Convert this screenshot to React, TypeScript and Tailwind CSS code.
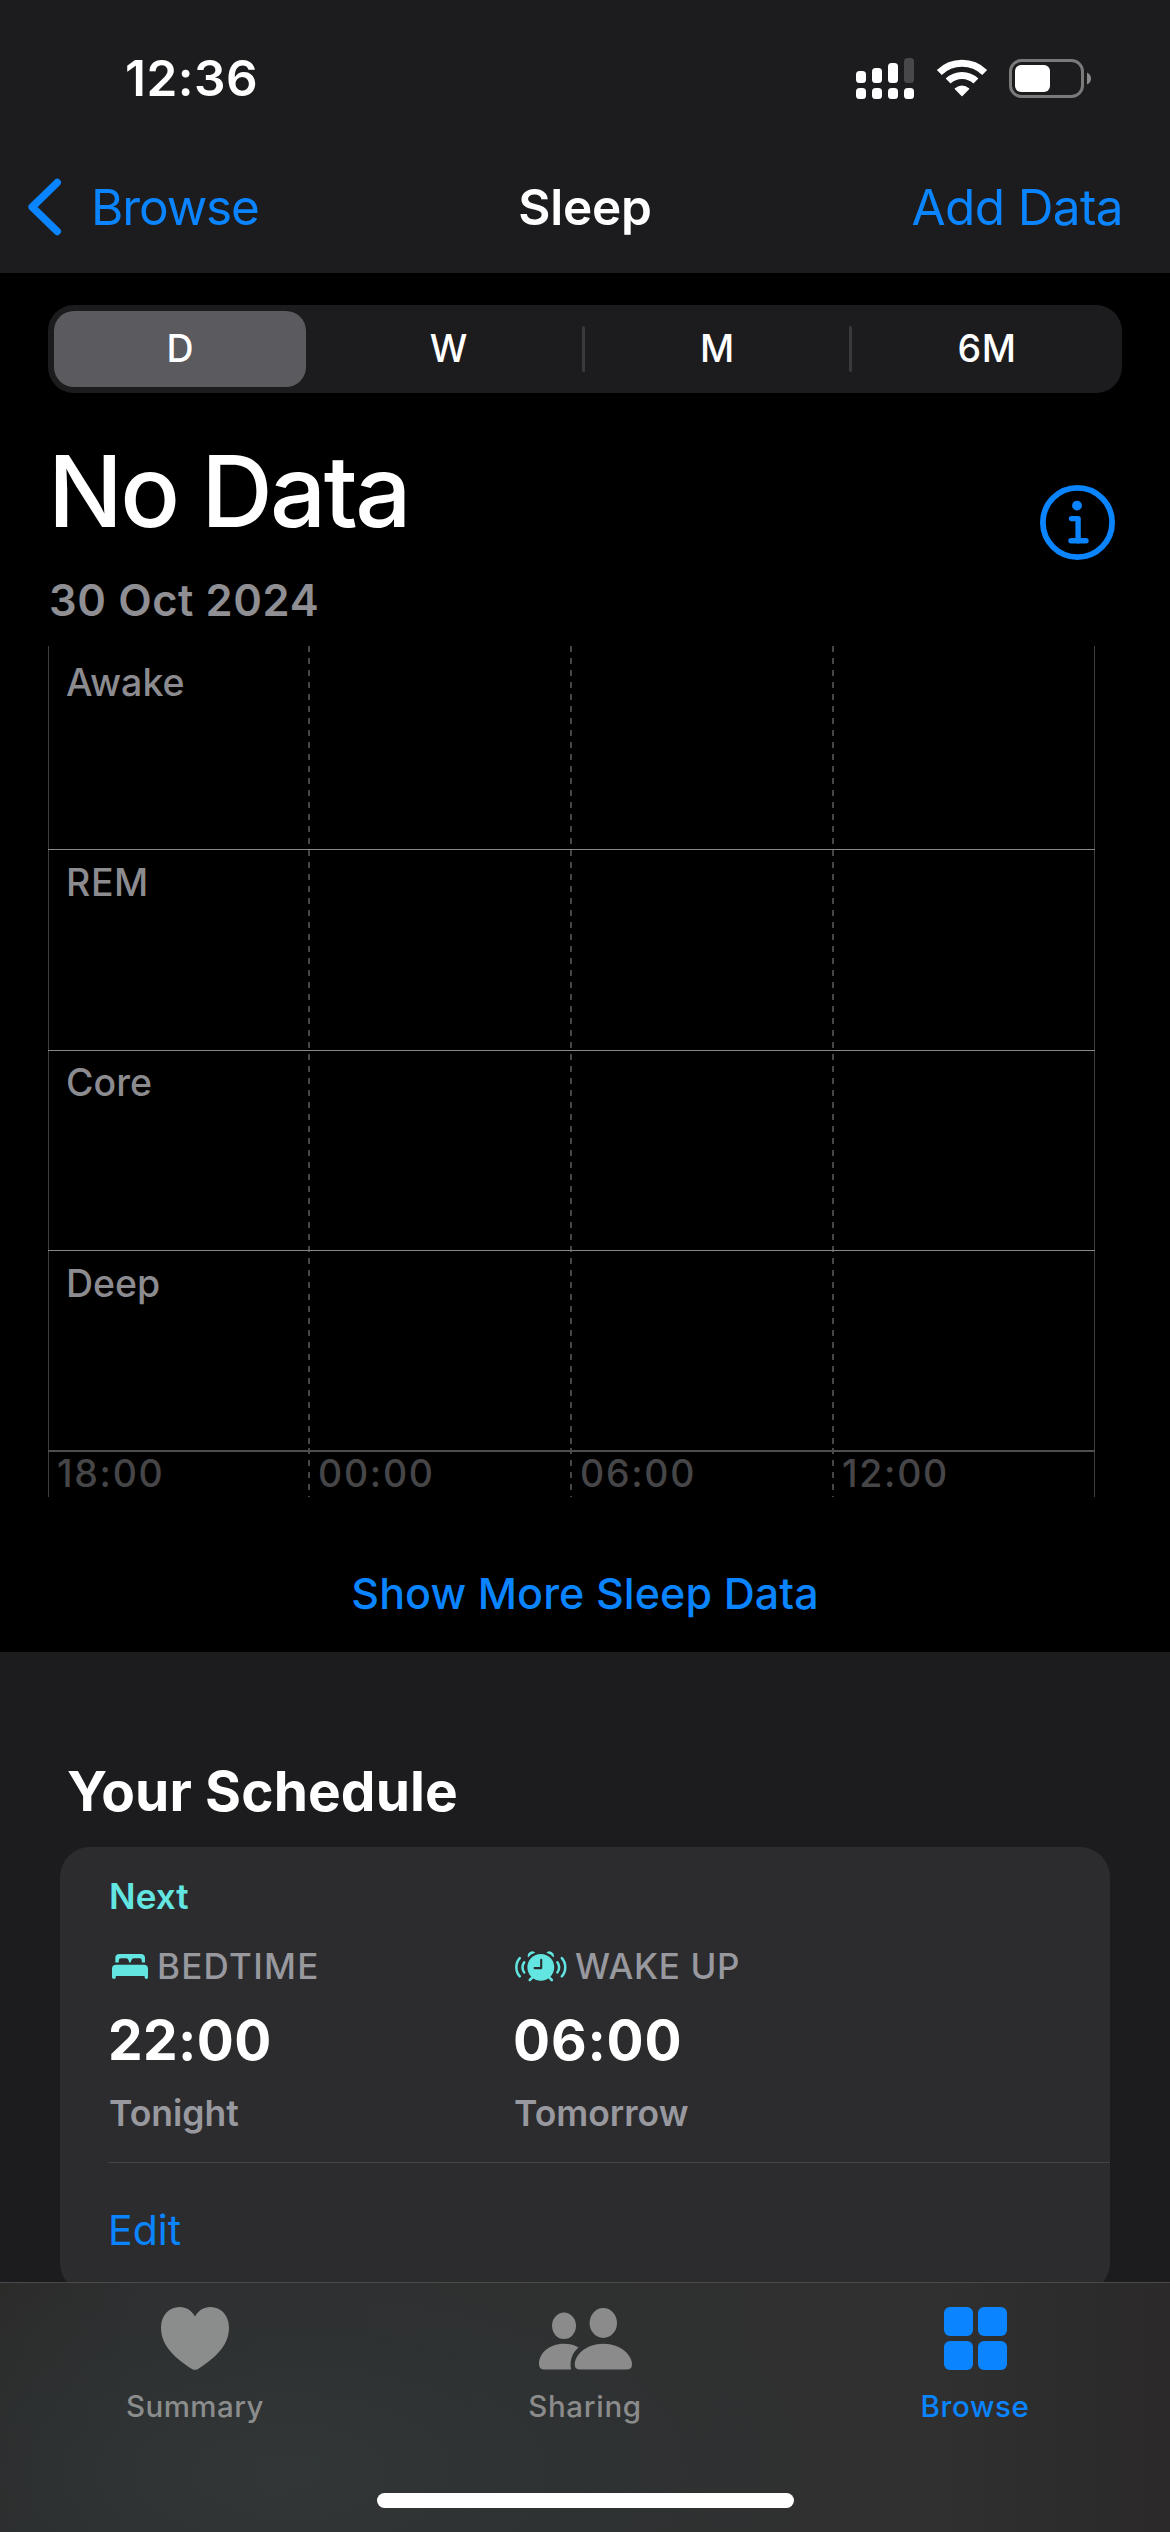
import React from "react";

const SEGMENT_LINE = "h-[46px] w-[3px] rounded-full bg-[#3a3a3d]";

function CellularIcon() {
  return (
    <svg width="58" height="41" viewBox="0 0 58 41" fill="#fff">
      <rect x="0" y="13" width="10" height="12" rx="3.5" />
      <rect x="16" y="10" width="10" height="15" rx="3.5" />
      <rect x="32" y="5" width="10" height="20" rx="3.5" />
      <rect x="48" y="0" width="10" height="25" rx="3.5" fill="#48484a" />
      {[0, 16, 32, 48].map((x) => (
        <rect key={x} x={x} y="30" width="10" height="11" rx="3.5" />
      ))}
    </svg>
  );
}

function WifiIcon() {
  return (
    <svg width="52" height="38" viewBox="0 0 52 38" fill="none" stroke="#fff" strokeWidth="7">
      <path d="M3.3 13.5A32.7 32.7 0 0 1 48.7 13.5" />
      <path d="M12.1 22.1A20 20 0 0 1 39.9 22.1" />
      <path
        d="M26 36.5L19.4 29.8Q26 24.4 32.6 29.8Z"
        fill="#fff"
        strokeWidth="1.4"
        strokeLinejoin="round"
      />
    </svg>
  );
}

function BatteryIcon() {
  return (
    <svg width="82" height="39" viewBox="0 0 82 39">
      <rect x="1.5" y="1.5" width="72" height="36" rx="11" fill="none" stroke="#7a7a7b" strokeWidth="3" />
      <rect x="6" y="6" width="35" height="27" rx="6" fill="#fff" />
      <path d="M78 13.5Q82 15.5 82 19.5T78 25.5Z" fill="#8a8a8b" />
    </svg>
  );
}

function InfoIcon() {
  return (
    <svg width="75" height="75" viewBox="0 0 75 75" fill="none" stroke="#0a84ff">
      <circle cx="37.5" cy="37.5" r="34.6" strokeWidth="5.8" />
      <circle cx="37" cy="20.6" r="4.9" fill="#0a84ff" stroke="none" />
      <path d="M31.5 33.6H38.1V55.7" strokeWidth="5.4" strokeLinecap="round" strokeLinejoin="round" />
      <path d="M31 55.8H46" strokeWidth="5.4" strokeLinecap="round" />
    </svg>
  );
}

function BedIcon() {
  return (
    <svg width="36" height="25" viewBox="0 0 36 25" fill="#63e6e2">
      <path d="M3.3 8.6V4.2Q3.3 0 7.5 0H28.8Q33 0 33 4.2V8.6H29.8V6.4Q29.8 4.2 27.6 4.2H22Q19.8 4.2 19.4 6.2L18.6 8.6H17.2L16.6 6.2Q16.2 4.2 14 4.2H9Q6.8 4.2 6.8 6.4V8.6Z" />
      <path d="M0 15Q0 10.8 4.2 10.8H31.8Q36 10.8 36 15V23.6Q36 25 34.4 25T32.6 23.6V22H3.8V23.6Q3.8 25 2 25T0 23.6Z" />
    </svg>
  );
}

function AlarmIcon() {
  return (
    <svg width="52" height="31" viewBox="0 0 52 31" fill="none" stroke="#63e6e2" strokeLinecap="round">
      <circle cx="25.8" cy="16.3" r="13.4" fill="#63e6e2" stroke="none" />
      <path d="M13 6.4Q11.8 2.6 15 0.9Q18.6 -0.7 20.2 1.8Q15.6 3.2 13 6.4Z" fill="#63e6e2" stroke="none" />
      <path d="M38.6 6.4Q39.8 2.6 36.6 0.9Q33 -0.7 31.4 1.8Q36 3.2 38.6 6.4Z" fill="#63e6e2" stroke="none" />
      <path d="M17.4 26.4L14.8 29M34.2 26.4L36.8 29" strokeWidth="2.6" />
      <path d="M26.2 8.8V17.1H19.6" stroke="#2c2c2e" strokeWidth="2.1" strokeLinejoin="round" />
      <path d="M4.8 7.2C0.2 12 0.2 20.6 4.8 25.4M46.8 7.2C51.4 12 51.4 20.6 46.8 25.4" strokeWidth="2.5" />
      <path d="M9.2 11.2Q5.6 16.3 9.2 21.4M42.4 11.2Q46 16.3 42.4 21.4" strokeWidth="2.5" />
    </svg>
  );
}

function HeartIcon() {
  return (
    <svg width="68" height="63" viewBox="0 0 68 63" fill="#8b8c8c">
      <path d="M34 9.6C37 3.8 42.6 0 49.4 0C60 0 68 8.6 68 20.4C68 37 56.6 49.4 37 61.9Q34 63.7 31 61.9C11.4 49.4 0 37 0 20.4C0 8.6 8 0 18.6 0C25.4 0 31 3.8 34 9.6Z" />
    </svg>
  );
}

function PeopleIcon() {
  return (
    <svg width="93" height="63" viewBox="0 0 93 63" fill="#8b8b8b">
      <ellipse cx="25" cy="18.8" rx="12" ry="13.2" />
      <ellipse cx="64.3" cy="16" rx="13.7" ry="15" />
      <path d="M39.5 40.6C35 37.6 30.4 36.7 25 36.7C9.6 36.7 0 46.8 0 56.8Q0 62.5 4.6 62.5H32C30.6 53.4 33 46.4 39.5 40.6Z" />
      <path d="M64.3 36.7C46.4 36.7 35.7 48.6 35.7 57.4Q35.7 62.5 41 62.5H87.7Q93 62.5 93 57.4C93 48.6 82.2 36.7 64.3 36.7Z" />
    </svg>
  );
}

function GridIcon() {
  return (
    <span className="grid grid-cols-[29px_29px] grid-rows-[29px_29px] gap-[5px]">
      {[0, 1, 2, 3].map((i) => (
        <span key={i} className="rounded-[6px] bg-[#0a84ff]" />
      ))}
    </span>
  );
}

function Header() {
  return (
    <header className="h-[273px] shrink-0 bg-[#1c1c1e]">
      <div className="flex h-[156px] items-center pl-[125px]">
        <span className="w-[731px] text-[49.5px] leading-[60px] font-semibold tracking-[0.49px]">12:36</span>
        <CellularIcon />
        <span className="ml-[22px]">
          <WifiIcon />
        </span>
        <span className="ml-[21px]">
          <BatteryIcon />
        </span>
      </div>
      <nav className="grid h-[102px] grid-cols-[1fr_auto_1fr] items-center text-[49.5px] leading-[60px]">
        <button className="flex items-center pl-[28px] text-[#0a84ff]">
          <svg width="34" height="58" viewBox="0 0 34 58" fill="none" stroke="#0a84ff" strokeWidth="7.6" strokeLinecap="round" strokeLinejoin="round">
            <path d="M29.2 4.6L4.2 29L29.2 53.4" />
          </svg>
          <span className="ml-[29px] tracking-[-1.12px]">Browse</span>
        </button>
        <h1 className="font-semibold tracking-[-0.22px]">Sleep</h1>
        <button className="justify-self-end pr-[47px] tracking-[-0.62px] text-[#0a84ff]">Add Data</button>
      </nav>
    </header>
  );
}

function RangePicker() {
  return (
    <div className="mx-12 flex h-[88px] items-center rounded-[26px] bg-[#1c1c1e] text-center text-[37.5px] font-medium">
      <span className="ml-[6px] flex h-[76px] w-[252px] items-center justify-center rounded-[20px] bg-[#5b5a5f]">D</span>
      <span className="ml-[9px] w-[267px]">W</span>
      <span className={SEGMENT_LINE} />
      <span className="w-[264px]">M</span>
      <span className={SEGMENT_LINE} />
      <span className="flex-1 tracking-[0.48px]">6M</span>
    </div>
  );
}

const DIVIDERS = [261, 523, 785];

function SleepChart() {
  return (
    <div className="relative mt-[21px] ml-12 h-[851px] w-[1047px] text-[37.5px] leading-[44px] font-medium">
      <svg className="absolute inset-0" width="1047" height="851" viewBox="0 0 1047 851" fill="none">
        <rect x="0" y="0" width="1" height="851" fill="#3f3f41" />
        <rect x="1046" y="0" width="1" height="851" fill="#3f3f41" />
        {DIVIDERS.map((x) => (
          <g key={x} stroke="#464648" strokeWidth="2" strokeDasharray="6 6">
            <path d={`M${x} 0V802`} />
            <path d={`M${x} 802V851`} />
          </g>
        ))}
        <rect y="203" width="1047" height="1" fill="#87878a" />
        <rect y="404" width="1047" height="1" fill="#87878a" />
        <rect y="604" width="1047" height="1" fill="#87878a" />
        <rect y="804" width="1047" height="2" fill="#4e4e50" />
      </svg>
      <div className="relative grid h-[806px] grid-rows-[204px_200px_200px_202px] pl-[18px] text-[#8b8b90]">
        <span className="pt-[15px]">Awake</span>
        <span className="pt-[11px] tracking-[0.6px]">REM</span>
        <span className="pt-[11px]">Core</span>
        <span className="pt-[12px]">Deep</span>
      </div>
      <div className="relative grid grid-cols-[261px_262px_262px_262px] pl-[9px] tracking-[1.7px] text-[#464648]">
        <span>18:00</span>
        <span>00:00</span>
        <span>06:00</span>
        <span>12:00</span>
      </div>
    </div>
  );
}

function Summary() {
  return (
    <section className="h-[1379px] shrink-0 bg-black pt-8">
      <RangePicker />
      <div className="mt-[38px] flex h-[194px] justify-between pr-[55px] pl-[48px]">
        <div>
          <h2 className="text-[99px] leading-[120px] font-medium tracking-[-2.6px]">No Data</h2>
          <p className="mt-[24px] pl-[1px] text-[43.5px] leading-[50px] font-semibold tracking-[0.6px] text-[#8e8e93]">
            30 Oct 2024
          </p>
        </div>
        <button className="h-[75px] pt-[54px]">
          <InfoIcon />
        </button>
      </div>
      <SleepChart />
      <button className="mt-[68px] block w-full text-center text-[43px] leading-[56px] font-medium tracking-[0.09px] text-[#0a84ff]">
        Show More Sleep Data
      </button>
    </section>
  );
}

type SlotProps = { icon: React.ReactNode; label: string; labelClass: string; time: string; timeClass: string; day: string };

function Slot({ icon, label, labelClass, time, timeClass, day }: SlotProps) {
  return (
    <div>
      <div className={"flex h-12 items-center text-[35px] font-medium text-[#98989f] " + labelClass}>
        {icon}
        {label}
      </div>
      <div className={"mt-[20px] text-[55px] leading-[60px] font-bold " + timeClass}>{time}</div>
      <div className="mt-[20px] pl-px text-[35.5px] leading-[48px] font-semibold text-[#98989f]">{day}</div>
    </div>
  );
}

function Schedule() {
  return (
    <section className="min-h-0 flex-1 overflow-hidden bg-[#1c1c1e] pt-[104px]">
      <h2 className="pl-[67px] text-[55px] leading-[70px] font-bold tracking-[0.1px]">Your Schedule</h2>
      <div className="mx-[60px] mt-[21px] h-[446px] rounded-[30px] bg-[#2c2c2e] pt-[25px] pl-12">
        <div className="pl-px text-[35px] leading-[48px] font-semibold tracking-[0.1px] text-[#63e6e2]">Next</div>
        <div className="mt-[22px] grid grid-cols-[405px_auto]">
          <Slot
            icon={<BedIcon />}
            label="BEDTIME"
            labelClass="gap-[9px] pl-1 tracking-[1.26px]"
            time="22:00"
            timeClass="tracking-[0.4px]"
            day="Tonight"
          />
          <Slot
            icon={<AlarmIcon />}
            label="WAKE UP"
            labelClass="gap-[8px] pl-[2px] tracking-[0.64px]"
            time="06:00"
            timeClass="tracking-[0.8px]"
            day="Tomorrow"
          />
        </div>
        <div className="mt-6 flex h-[132px] items-center border-t border-[#434346] pt-[5px] text-[41px] text-[#0a84ff]">
          Edit
        </div>
      </div>
    </section>
  );
}

type TabProps = { icon: React.ReactNode; label: string; className: string };

function Tab({ icon, label, className }: TabProps) {
  return (
    <button className={"flex flex-col items-center text-[29.5px] leading-[36px] font-medium " + className}>
      <span className="flex h-[64px] items-center">{icon}</span>
      <span className="mt-[18px]">{label}</span>
    </button>
  );
}

function TabBar() {
  return (
    <footer className="h-[250px] shrink-0 border-t border-[#4a4a4b] bg-[radial-gradient(ellipse_540px_250px_at_280px_190px,rgba(50,56,57,0.8),rgba(46,52,53,0.5)_55%,transparent),linear-gradient(to_right,#2b2a29,#2e2e2f_12%,#2f3030_50%,#303031_80%,#2b2929)] pt-[23px]">
      <div className="grid grid-cols-3">
        <Tab icon={<HeartIcon />} label="Summary" className="tracking-[0.45px] text-[#8b8c8c]" />
        <Tab icon={<PeopleIcon />} label="Sharing" className="tracking-[0.7px] text-[#8b8b8b]" />
        <Tab icon={<GridIcon />} label="Browse" className="tracking-[0.62px] text-[#0a84ff]" />
      </div>
      <div className="mx-auto mt-[69px] h-[15px] w-[417px] rounded-full bg-white" />
    </footer>
  );
}

export default function App() {
  return (
    <div className="flex h-[2532px] w-[1170px] flex-col overflow-hidden bg-[#1c1c1e] font-[Inter,sans-serif] text-white">
      <Header />
      <Summary />
      <Schedule />
      <TabBar />
    </div>
  );
}
